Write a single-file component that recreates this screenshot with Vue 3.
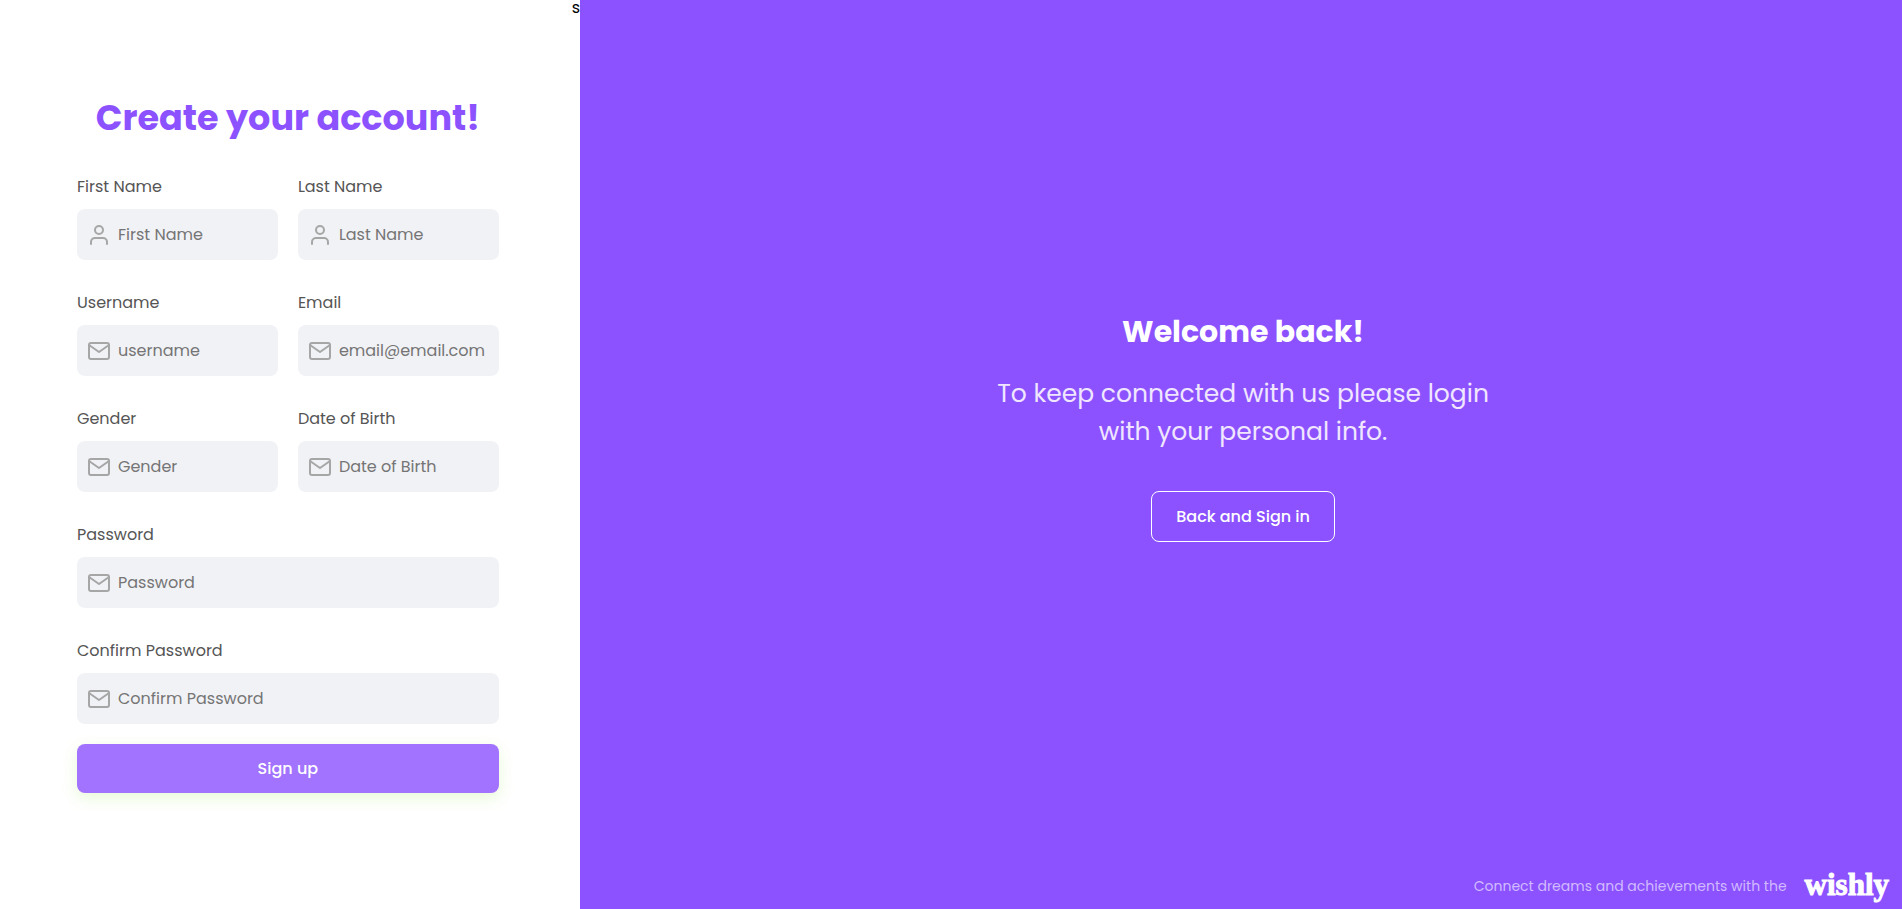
<script setup>
import { reactive } from 'vue'

const fields = [
  { id: 'firstName', label: 'First Name', placeholder: 'First Name', type: 'text', icon: 'user' },
  { id: 'lastName', label: 'Last Name', placeholder: 'Last Name', type: 'text', icon: 'user' },
  { id: 'username', label: 'Username', placeholder: 'username', type: 'text', icon: 'mail' },
  { id: 'email', label: 'Email', placeholder: 'email@email.com', type: 'email', icon: 'mail' },
  { id: 'gender', label: 'Gender', placeholder: 'Gender', type: 'text', icon: 'mail' },
  { id: 'birth', label: 'Date of Birth', placeholder: 'Date of Birth', type: 'text', icon: 'mail' },
  { id: 'password', label: 'Password', placeholder: 'Password', type: 'password', icon: 'mail', wide: true },
  { id: 'confirm', label: 'Confirm Password', placeholder: 'Confirm Password', type: 'password', icon: 'mail', wide: true },
]

const values = reactive(Object.fromEntries(fields.map((f) => [f.id, ''])))
</script>

<template>
  <div class="page">
    <div class="side">
      <main class="signup">
        <h1 class="title">Create your account!</h1>
        <form class="form" @submit.prevent>
          <div class="fields">
            <div v-for="f in fields" :key="f.id" class="field" :class="{ wide: f.wide }">
              <label class="label" :for="f.id">{{ f.label }}</label>
              <div class="box">
                <svg class="icon" viewBox="0 0 24 24" aria-hidden="true">
                  <template v-if="f.icon === 'user'">
                    <path d="M20 21v-2a4 4 0 0 0-4-4H8a4 4 0 0 0-4 4v2" />
                    <circle cx="12" cy="7" r="4" />
                  </template>
                  <template v-else>
                    <rect x="2" y="4" width="20" height="16" rx="2" />
                    <path d="M22 6l-10 7L2 6" />
                  </template>
                </svg>
                <input :id="f.id" v-model="values[f.id]" class="input" :type="f.type" :placeholder="f.placeholder" />
              </div>
            </div>
          </div>
          <button class="submit" type="submit">Sign up</button>
        </form>
      </main>
      <span class="stray">s</span>
    </div>

    <aside class="welcome">
      <div class="message">
        <h2 class="heading">Welcome back!</h2>
        <p class="text">To keep connected with us please login<br />with your personal info.</p>
        <button class="back" type="button">Back and Sign in</button>
      </div>
      <footer class="footer">
        <span>Connect dreams and achievements with the</span>
        <span class="logo">wishly</span>
      </footer>
    </aside>
  </div>
</template>

<style>
body {
  margin: 0;
  background: #fff;
}
</style>

<style scoped>
.page {
  display: flex;
  min-height: 100vh;
  font-family: Poppins, Inter, "Open Sans", sans-serif;
  font-size: 16px;
  line-height: 24px;
}

.page *,
.page {
  box-sizing: border-box;
}

.side {
  display: flex;
  flex: 0 0 30.5%;
  min-width: 480px;
}

.signup {
  flex: 1;
  min-width: 0;
  display: flex;
  flex-direction: column;
  justify-content: center;
  padding: 0 73px 26px 77px;
}

.stray {
  line-height: 16px;
  color: #000;
}

.title {
  margin: 0 0 30px;
  font-size: 35px;
  line-height: 55px;
  font-weight: 700;
  text-align: center;
  white-space: nowrap;
  color: #8c52ff;
}

.fields {
  display: grid;
  grid-template-columns: 1fr 1fr;
  gap: 31px 20px;
}

.field {
  min-width: 0;
}

.wide {
  grid-column: 1 / -1;
}

.label {
  display: block;
  margin-bottom: 10px;
  color: #555;
}

.box {
  display: flex;
  align-items: center;
  gap: 7px;
  height: 51px;
  padding: 0 10px;
  border-radius: 8px;
  background: #f1f2f6;
}

.icon {
  flex: none;
  width: 24px;
  height: 24px;
  fill: none;
  stroke: #a6a6a6;
  stroke-width: 2;
  stroke-linecap: round;
  stroke-linejoin: round;
}

.input {
  flex: 1;
  min-width: 0;
  padding: 0;
  border: 0;
  outline: 0;
  background: transparent;
  font: inherit;
  color: #555;
}

.input::placeholder {
  color: #757575;
  opacity: 1;
}

.submit {
  display: block;
  width: 100%;
  height: 49px;
  margin-top: 20px;
  border: 0;
  border-radius: 8px;
  background: #a273ff;
  box-shadow: 0 5px 15px rgba(178, 240, 120, 0.3);
  font: inherit;
  font-weight: 500;
  color: #fff;
}

.welcome {
  flex: 1;
  display: flex;
  flex-direction: column;
  background: #8c52ff;
  color: #fff;
}

.message {
  flex: 1;
  display: flex;
  flex-direction: column;
  align-items: center;
  justify-content: center;
  padding: 0 0 12px 4px;
  text-align: center;
}

.heading {
  margin: 0;
  font-size: 30px;
  line-height: 46px;
  font-weight: 700;
}

.text {
  margin: 20px 0 40px;
  font-size: 25px;
  line-height: 38px;
  color: #f0e6ff;
}

.back {
  height: 51px;
  padding: 0 24px;
  border: 1px solid #fff;
  border-radius: 8px;
  background: transparent;
  font: inherit;
  font-weight: 500;
  color: #fff;
}

.footer {
  display: flex;
  align-items: center;
  justify-content: flex-end;
  gap: 18px;
  height: 46px;
  padding-right: 13px;
  font-size: 14px;
  color: #d1baff;
}

.logo {
  padding-bottom: 2px;
  font-family: "Liberation Serif", serif;
  font-size: 31px;
  font-weight: 700;
  color: #fff;
  -webkit-text-stroke: 1px #fff;
}
</style>
